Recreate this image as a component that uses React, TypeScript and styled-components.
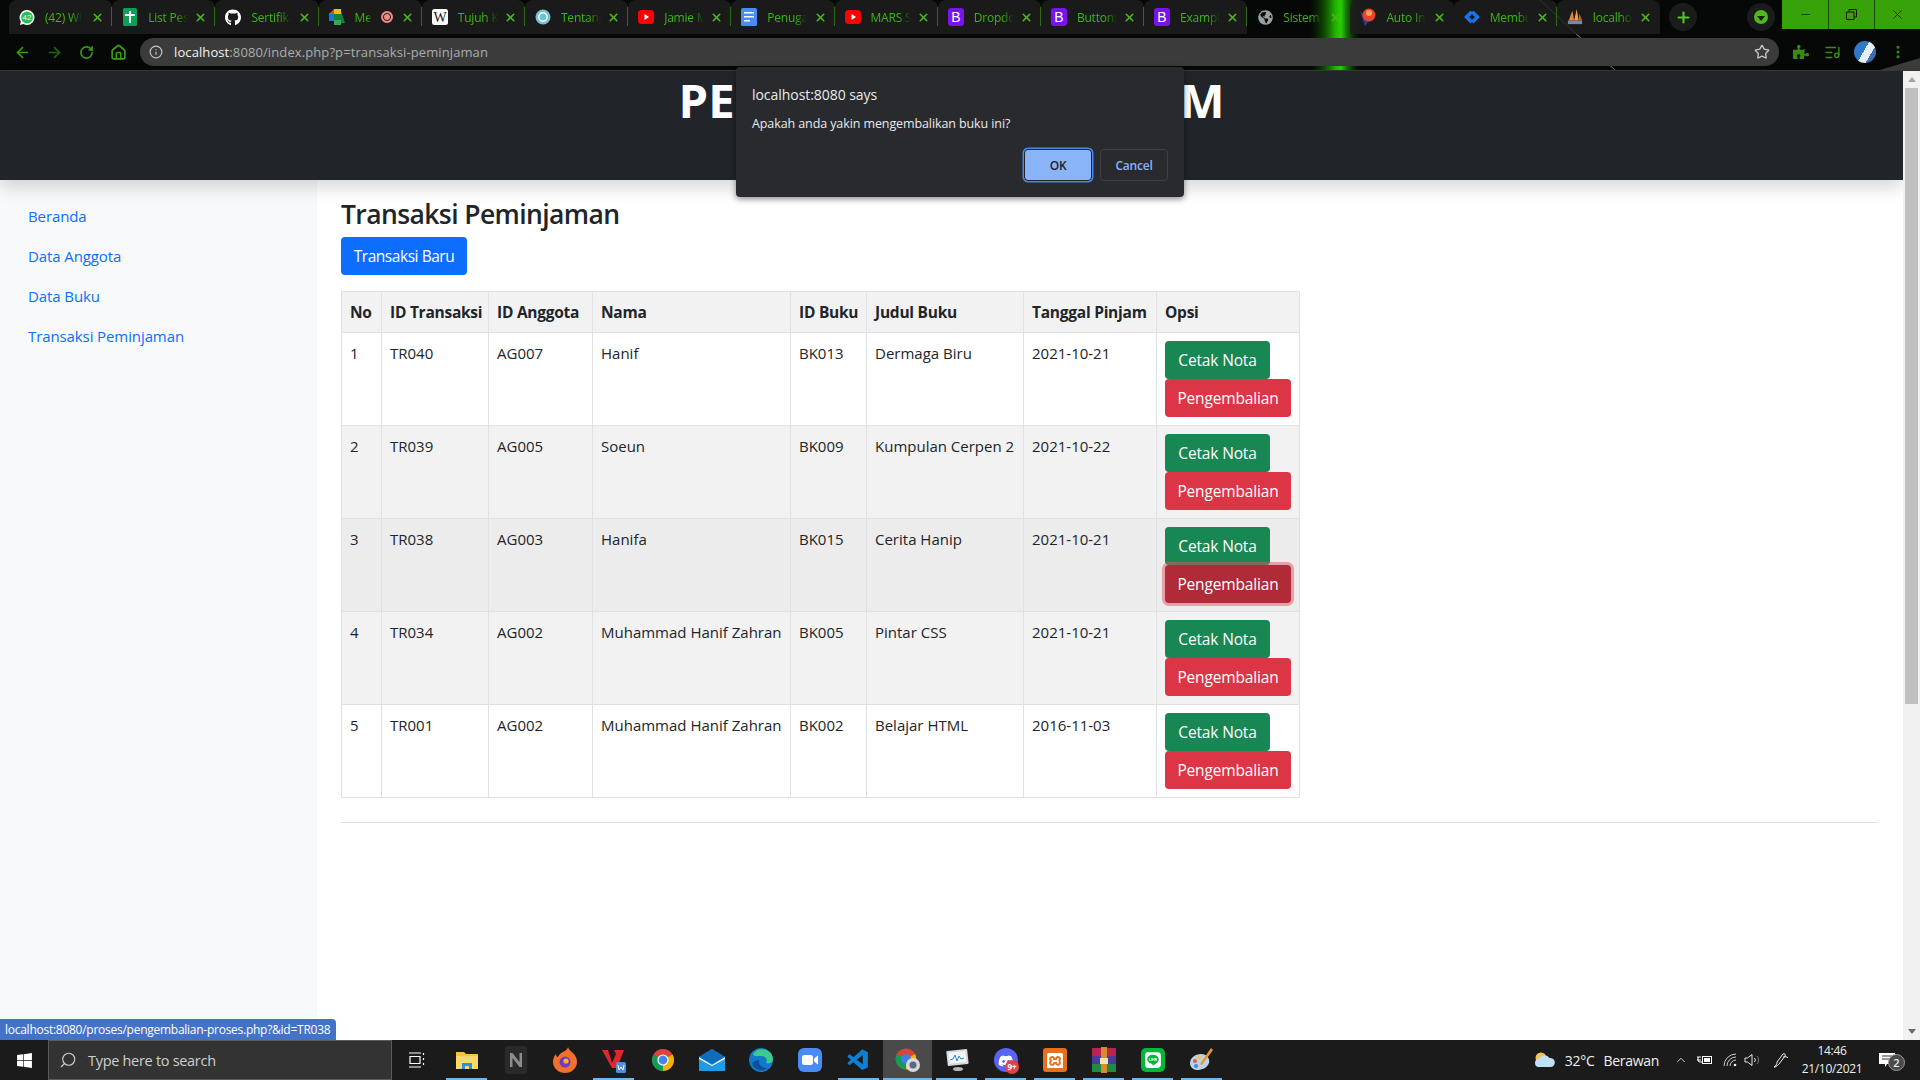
import React from "react";
import styled, { createGlobalStyle } from "styled-components";
import { ArrowLeft, ArrowRight, RotateCw, Home, Info, Star, ListMusic, MoreVertical, X, Plus, Minus, ChevronUp, Search } from "lucide-react";
import { FaGithub, FaWindows, FaGlobeAmericas, FaPuzzlePiece, FaDiscord, FaLine } from "react-icons/fa";
import { SiXampp } from "react-icons/si";
import { VscVscode } from "react-icons/vsc";

const UI = `"Open Sans", "Noto Sans", "Liberation Sans", sans-serif`;

const Global = createGlobalStyle`
  html, body { margin: 0; padding: 0; width: 1920px; height: 1080px; overflow: hidden; background: #fff; }
  * { box-sizing: border-box; }
  #root { width: 1920px; height: 1080px; }
`;

const Screen = styled.div`
  position: relative;
  width: 1920px;
  height: 1080px;
  overflow: hidden;
  display: flex;
  flex-direction: column;
  font-family: ${UI};
  color: #212529;
`;

/* ---------- browser chrome ---------- */
const ChromeFrame = styled.div`
  position: relative;
  height: 71px;
  flex: none;
  background: #060807;
  border-bottom: 1px solid #2c4321;
`;
const Wallpaper = styled.svg`
  position: absolute;
  inset: 0;
`;
const TabStrip = styled.div`
  position: relative;
  height: 34px;
  display: flex;
  align-items: stretch;
  padding-left: 9px;
`;
const Tab = styled.div<{ $plain?: boolean; $noSep?: boolean }>`
  position: relative;
  width: 103.2px;
  flex: none;
  display: flex;
  align-items: center;
  padding-left: 10px;
  background: ${(p) => (p.$plain ? "transparent" : "rgba(30, 31, 31, 0.82)")};
  border-radius: 8px 8px 0 0;
  color: #3db512;
  font-size: 12px;
  &::after {
    content: "";
    display: ${(p) => (p.$noSep ? "none" : "block")};
    position: absolute;
    right: 0;
    top: 7px;
    bottom: 8px;
    width: 1px;
    background: #2e6b14;
  }
`;
const Favicon = styled.span`
  width: 16px;
  height: 16px;
  flex: none;
  display: flex;
  align-items: center;
  justify-content: center;
  color: #fff;
`;
const TabTitle = styled.span<{ $w?: number }>`
  margin-left: 10px;
  width: ${(p) => p.$w ?? 40}px;
  overflow: hidden;
  white-space: nowrap;
  letter-spacing: -0.2px;
  -webkit-mask-image: linear-gradient(90deg, #000 70%, transparent);
  mask-image: linear-gradient(90deg, #000 70%, transparent);
`;
const RecDot = styled.span`
  position: absolute;
  left: 62px;
  top: 11px;
  width: 12px;
  height: 12px;
  border-radius: 50%;
  background: #f28b82;
  border: 2px solid #f28b82;
  box-shadow: inset 0 0 0 1px #1a1b1b;
`;
const TabClose = styled(X)`
  position: absolute;
  right: 8px;
  top: 11px;
  color: #4db51a;
`;
const RoundBtn = styled.div<{ $left: number }>`
  width: 28px;
  height: 28px;
  margin: 3px 0 0 ${(p) => p.$left}px;
  flex: none;
  border-radius: 50%;
  background: #1a1b1b;
  display: flex;
  align-items: center;
  justify-content: center;
  color: #4fc81a;
`;
const StatusDot = styled.span`
  width: 14px;
  height: 14px;
  border-radius: 50%;
  background: #4fb81a;
  display: flex;
  align-items: center;
  justify-content: center;
  &::after {
    content: "";
    border-left: 4px solid transparent;
    border-right: 4px solid transparent;
    border-top: 5px solid #1a1b1b;
    margin-top: 2px;
  }
`;
const WinControls = styled.div`
  position: absolute;
  right: 0;
  top: 0;
  height: 29px;
  display: flex;
  background: #38a20b;
`;
const WinBtn = styled.div`
  width: 46px;
  height: 29px;
  display: flex;
  align-items: center;
  justify-content: center;
  color: #0a1a05;
  & + & { border-left: 1px solid #17470a; }
`;
const Toolbar = styled.div`
  position: relative;
  height: 36px;
  display: flex;
  align-items: center;
  padding-left: 6px;
`;
const NavBtn = styled.span<{ $dim?: boolean }>`
  width: 32px;
  display: flex;
  justify-content: center;
  flex: none;
  color: ${(p) => (p.$dim ? "#255f10" : "#3a9a14")};
`;
const AddressBar = styled.div`
  margin-left: 6px;
  width: 1639px;
  height: 28px;
  flex: none;
  background: #3b3b3b;
  border-radius: 14px;
  display: flex;
  align-items: center;
  padding-left: 9px;
  font-size: 13px;
  color: #a9adb0;
`;
const Url = styled.span`
  margin-left: 11px;
  letter-spacing: 0.1px;
  flex: 1;
  white-space: nowrap;
  b { font-weight: 400; color: #f1f3f4; }
`;
const StarIcon = styled(Star)`
  color: #c7c7c7;
  margin-right: 9px;
`;
const ToolIcons = styled.div`
  display: flex;
  align-items: center;
  margin-left: 9px;
  color: #3a8a16;
`;
const ToolSlot = styled.span<{ $w: number }>`
  width: ${(p) => p.$w}px;
  display: flex;
  justify-content: center;
  align-items: center;
`;
const Avatar = styled.span`
  width: 22px;
  height: 22px;
  border-radius: 50%;
  background: linear-gradient(120deg, #2f79c8 0 45%, #e8eef5 45% 70%, #3d6fb0 70%);
`;

/* ---------- page ---------- */
const Viewport = styled.div`
  flex: 1;
  min-height: 0;
  display: flex;
`;
const Page = styled.div`
  flex: 1;
  min-width: 0;
  display: flex;
  flex-direction: column;
  background: #fff;
`;
const Header = styled.header`
  position: relative;
  height: 109px;
  flex: none;
  background: #212529;
  box-shadow: 0 8px 16px rgba(0, 0, 0, 0.15);
  text-align: center;
`;
const SiteTitle = styled.h1`
  margin: 0;
  font-size: 47.2px;
  line-height: 58px;
  font-weight: 700;
  color: #fff;
`;
const Body = styled.div`
  flex: 1;
  min-height: 0;
  display: flex;
`;
const Sidebar = styled.nav`
  width: 317px;
  flex: none;
  background: #f8f9fa;
  padding-top: 16px;
`;
const SideLink = styled.a`
  display: block;
  height: 40px;
  padding: 8px 28px;
  line-height: 24px;
  font-size: 15px;
  letter-spacing: -0.1px;
  color: #0d6efd;
`;
const Main = styled.main`
  flex: 1;
  min-width: 0;
  padding: 18px 25px 0 24px;
`;
const PageTitle = styled.h2`
  margin: 0 0 6px;
  font-size: 26.5px;
  line-height: 33px;
  font-weight: 600;
  letter-spacing: -0.6px;
`;
const Btn = styled.button<{ $kind: "primary" | "success" | "danger"; $focus?: boolean }>`
  display: block;
  height: 38px;
  padding: 0;
  border: 1px solid transparent;
  border-radius: 4px;
  font-family: ${UI};
  font-size: 15.5px;
  letter-spacing: -0.15px;
  color: #fff;
  white-space: nowrap;
  background: ${(p) =>
    p.$focus ? "#b02a37" : p.$kind === "primary" ? "#0d6efd" : p.$kind === "success" ? "#198754" : "#dc3545"};
  box-shadow: ${(p) => (p.$focus ? "0 0 0 3px rgba(225,83,97,.5)" : "none")};
  position: relative;
`;
const AddBtn = styled(Btn)`
  width: 126px;
  letter-spacing: -0.45px;
`;
const CetakBtn = styled(Btn)`
  width: 105px;
`;
const KembaliBtn = styled(Btn)`
  width: 126px;
`;
const Table = styled.table`
  margin-top: 16px;
  width: 958px;
  table-layout: fixed;
  border-collapse: collapse;
  font-size: 15px;
  line-height: 24px;
`;
const Row = styled.tr<{ $bg: string }>`
  background: ${(p) => p.$bg};
`;
const Th = styled.th`
  border: 1px solid #dee2e6;
  padding: 8px;
  text-align: left;
  font-weight: 700;
  font-size: 15.5px;
  white-space: nowrap;
  letter-spacing: -0.25px;
`;
const Td = styled.td`
  border: 1px solid #dee2e6;
  padding: 8px;
  vertical-align: top;
  white-space: nowrap;
  color: #212529;
`;
const Rule = styled.hr`
  margin: 24px 0 0;
  border: 0;
  border-top: 1px solid #dfe2e5;
`;
const Scrollbar = styled.div`
  width: 17px;
  flex: none;
  position: relative;
  background: #f1f1f1;
  display: flex;
  flex-direction: column;
  align-items: center;
`;
const ArrowUp = styled.span`
  margin-top: 6px;
  border-left: 4px solid transparent;
  border-right: 4px solid transparent;
  border-bottom: 5px solid #a3a3a3;
`;
const Thumb = styled.div`
  margin-top: 6px;
  width: 13px;
  height: 616px;
  background: #c0c0c0;
`;
const ArrowDown = styled.span`
  margin-top: auto;
  margin-bottom: 6px;
  border-left: 4px solid transparent;
  border-right: 4px solid transparent;
  border-top: 5px solid #6a6a6a;
`;

/* ---------- overlays ---------- */
const Dialog = styled.div`
  position: absolute;
  left: 736px;
  top: 67px;
  width: 448px;
  height: 130px;
  background: #292a2d;
  border-radius: 4px;
  box-shadow: 0 2px 6px rgba(0, 0, 0, 0.45);
  padding: 16px;
  color: #e8eaed;
`;
const DialogTitle = styled.div`
  font-size: 14px;
  line-height: 24px;
  letter-spacing: -0.05px;
`;
const DialogText = styled.div`
  margin-top: 8px;
  font-size: 12.5px;
  line-height: 18px;
  letter-spacing: -0.1px;
`;
const DialogActions = styled.div`
  position: absolute;
  right: 16px;
  bottom: 16px;
  display: flex;
  gap: 8px;
`;
const DialogBtn = styled.div<{ $ok?: boolean }>`
  width: 68px;
  height: 32px;
  display: flex;
  align-items: center;
  justify-content: center;
  border-radius: 4px;
  font-size: 12px;
  font-weight: 600;
  letter-spacing: -0.2px;
  background: ${(p) => (p.$ok ? "#8ab4f8" : "transparent")};
  color: ${(p) => (p.$ok ? "#202124" : "#8ab4f8")};
  border: ${(p) => (p.$ok ? "1px solid #202124" : "1px solid #3c4043")};
  box-shadow: ${(p) => (p.$ok ? "0 0 0 1.5px #4a86e8" : "none")};
`;
const StatusBubble = styled.div`
  position: absolute;
  left: 0;
  bottom: 40px;
  height: 21px;
  width: 336px;
  background: #4373c9;
  color: #fff;
  border-radius: 0 4px 0 0;
  padding-left: 5px;
  font-size: 12px;
  line-height: 21px;
  letter-spacing: -0.26px;
  white-space: nowrap;
`;

/* ---------- taskbar ---------- */
const Taskbar = styled.footer`
  height: 40px;
  flex: none;
  background: #1b1b1b;
  display: flex;
  align-items: stretch;
  color: #fff;
`;
const StartBtn = styled.div`
  width: 48px;
  display: flex;
  align-items: center;
  justify-content: center;
`;
const SearchBox = styled.div`
  width: 344px;
  background: #333;
  border: 1px solid #5c5c5c;
  display: flex;
  align-items: center;
  padding-left: 10px;
  color: #cfcfcf;
  font-size: 14.5px;
  letter-spacing: -0.3px;
`;
const SearchLabel = styled.span`
  margin-left: 11px;
`;
const MirrorSearch = styled(Search)`
  transform: scaleX(-1);
`;
const TaskViewSlot = styled.div`
  width: 50px;
  display: flex;
  align-items: center;
  justify-content: center;
`;
const AppSlot = styled.div<{ $open?: boolean; $active?: boolean }>`
  position: relative;
  width: 49px;
  flex: none;
  display: flex;
  align-items: center;
  justify-content: center;
  background: ${(p) => (p.$active ? "#4a4a4a" : "transparent")};
  &::after {
    content: "";
    display: ${(p) => (p.$open ? "block" : "none")};
    position: absolute;
    bottom: 0;
    left: ${(p) => (p.$active ? 0 : "4px")};
    right: ${(p) => (p.$active ? 0 : "4px")};
    height: 2px;
    background: #6db6ee;
  }
`;
const Tray = styled.div`
  margin-left: auto;
  display: flex;
  align-items: center;
  font-size: 14px;
  color: #f0f0f0;
`;
const TrayText = styled.span<{ $left: number }>`
  margin-left: ${(p) => p.$left}px;
  letter-spacing: -0.3px;
  white-space: nowrap;
`;
const TraySlot = styled.span<{ $w: number; $left?: number }>`
  width: ${(p) => p.$w}px;
  margin-left: ${(p) => p.$left ?? 0}px;
  display: flex;
  justify-content: center;
  align-items: center;
`;
const Clock = styled.div`
  width: 72px;
  text-align: center;
  font-size: 12px;
  line-height: 18px;
  letter-spacing: -0.3px;
`;
const Notify = styled.div`
  position: relative;
  width: 38px;
  height: 40px;
  margin-right: 14px;
  display: flex;
  align-items: center;
  justify-content: center;
`;
const NotifyBadge = styled.span`
  position: absolute;
  left: 20px;
  top: 14px;
  width: 17px;
  height: 17px;
  border-radius: 50%;
  background: #4a4a4a;
  border: 1px solid #999;
  font-size: 11px;
  line-height: 15px;
  text-align: center;
  font-weight: 600;
`;
const DiscordBadge = styled.span`
  position: absolute;
  left: 24px;
  top: 20px;
  width: 14px;
  height: 14px;
  border-radius: 50%;
  background: #e5404a;
  font-size: 8px;
  line-height: 14px;
  text-align: center;
  color: #fff;
  font-weight: 700;
`;

/* ---------- small drawings ---------- */
const ChromeLogo = ({ size = 24 }: { size?: number }) => (
  <svg width={size} height={size} viewBox="0 0 24 24">
    <circle cx="12" cy="12" r="11" fill="#db4437" />
    <path d="M12 12 L21.5 6.5 A11 11 0 0 1 12 23 Z" fill="#f4b400" />
    <path d="M12 12 L12 23 A11 11 0 0 1 2.5 6.5 Z" fill="#0f9d58" />
    <circle cx="12" cy="12" r="5.6" fill="#fff" />
    <circle cx="12" cy="12" r="4.4" fill="#4285f4" />
  </svg>
);
const Bootstrap = () => (
  <svg width="16" height="18" viewBox="0 0 16 18">
    <rect y="0" width="16" height="18" rx="3" fill="#7a12f0" />
    <text x="8" y="14" textAnchor="middle" fontFamily="Liberation Sans" fontSize="14" fill="#fff">B</text>
  </svg>
);
const YouTube = () => (
  <svg width="16" height="14" viewBox="0 0 16 14">
    <rect width="16" height="14" rx="3.5" fill="#f00" />
    <path d="M6.5 4 L11 7 L6.5 10 Z" fill="#fff" />
  </svg>
);
const favicons: React.ReactNode[] = [
  <svg width="17" height="17" viewBox="0 0 17 17">
    <path d="M8.5 0.5a8 8 0 0 1 0 16 8 8 0 0 1-3.8-1L1 16.5l1-3.6a8 8 0 0 1 6.5-12.4z" fill="#fff" />
    <circle cx="8.5" cy="8.5" r="6.3" fill="#25c05a" />
    <text x="8.5" y="11.5" textAnchor="middle" fontFamily="Liberation Sans" fontSize="8.5" fill="#fff">42</text>
  </svg>,
  <svg width="14" height="18" viewBox="0 0 14 18">
    <rect width="14" height="18" rx="1.5" fill="#0f9d58" />
    <path d="M6 3h2v3h4v2H8v7H6V8H2V6h4z" fill="#fff" />
  </svg>,
  <FaGithub size={17} />,
  <svg width="16" height="16" viewBox="0 0 16 16">
    <rect x="0" y="4" width="5" height="8" fill="#1a73e8" />
    <path d="M5 0h7v5H5z" fill="#fbbc04" />
    <path d="M5 0v5H0z" fill="#ea4335" />
    <path d="M5 11h7v5H5z" fill="#34a853" />
    <path d="M12 2v12h4z M5 5h7v6H5z" fill="#188038" />
  </svg>,
  <svg width="16" height="16" viewBox="0 0 16 16">
    <rect width="16" height="16" rx="2.5" fill="#fff" />
    <text x="8" y="13" textAnchor="middle" fontFamily="Liberation Serif" fontSize="14" fill="#111">W</text>
  </svg>,
  <svg width="16" height="16" viewBox="0 0 16 16">
    <circle cx="8" cy="8" r="7.5" fill="#6fc3d4" />
    <circle cx="8" cy="8" r="4.2" fill="none" stroke="#fff" strokeWidth="1.4" />
  </svg>,
  <YouTube />,
  <svg width="16" height="18" viewBox="0 0 16 18">
    <rect width="16" height="18" rx="1.5" fill="#4a8cf7" />
    <path d="M3 4h10v1.6H3zM3 8h10v1.6H3zM3 12h6v1.6H3z" fill="#fff" />
  </svg>,
  <YouTube />,
  <Bootstrap />,
  <Bootstrap />,
  <Bootstrap />,
  <FaGlobeAmericas size={15} color="#9aa0a6" />,
  <svg width="16" height="18" viewBox="0 0 16 18">
    <path d="M0 3l5 15 4-5z" fill="#2e3f9e" />
    <circle cx="9" cy="7" r="6.5" fill="#e8452c" />
    <circle cx="9" cy="5" r="3" fill="#f5a25d" />
  </svg>,
  <svg width="17" height="14" viewBox="0 0 17 14">
    <path d="M7 0 L0 7 L7 14 L9.5 11 L5.5 7 L9.5 3 Z" fill="#1a73e8" />
    <path d="M10 0 L17 7 L10 14 L7.5 11 L11.5 7 L7.5 3 Z" fill="#1a73e8" />
  </svg>,
  <svg width="18" height="18" viewBox="0 0 18 18">
    <path d="M2 13 L6 2 L8 13Z" fill="#e88a2a" />
    <path d="M8 13 L11 0 L13 13Z" fill="#f2a13a" />
    <path d="M13 13 L14 5 L17 13Z" fill="#c96a14" />
    <rect x="1" y="13" width="16" height="4" fill="#7c86a8" />
  </svg>,
];
const tabs = [
  { t: "(42) WhatsApp", w: 37 },
  { t: "List Peserta", w: 40 },
  { t: "Sertifikat", w: 40 },
  { t: "Meet", w: 17, rec: true },
  { t: "Tujuh Keajaiban", w: 40 },
  { t: "Tentang Kami", w: 40 },
  { t: "Jamie Miller", w: 40 },
  { t: "Penugasan", w: 40 },
  { t: "MARS Song", w: 40 },
  { t: "Dropdowns", w: 40 },
  { t: "Buttons", w: 40 },
  { t: "Examples", w: 40 },
  { t: "Sistem Informasi", w: 40, plain: true },
  { t: "Auto Install", w: 40, noSep: true },
  { t: "Membuat", w: 40 },
  { t: "localhost", w: 40, noSep: true },
];
const colWidths = [40, 107, 104, 198, 76, 157, 133, 143];
const heads = ["No", "ID Transaksi", "ID Anggota", "Nama", "ID Buku", "Judul Buku", "Tanggal Pinjam", "Opsi"];
const rows = [
  ["1", "TR040", "AG007", "Hanif", "BK013", "Dermaga Biru", "2021-10-21"],
  ["2", "TR039", "AG005", "Soeun", "BK009", "Kumpulan Cerpen 2", "2021-10-22"],
  ["3", "TR038", "AG003", "Hanifa", "BK015", "Cerita Hanip", "2021-10-21"],
  ["4", "TR034", "AG002", "Muhammad Hanif Zahran", "BK005", "Pintar CSS", "2021-10-21"],
  ["5", "TR001", "AG002", "Muhammad Hanif Zahran", "BK002", "Belajar HTML", "2016-11-03"],
];
const rowBg = ["#fff", "#f2f2f2", "#ececec", "#f2f2f2", "#fff"];

const apps: { icon: React.ReactNode; open?: boolean; active?: boolean; badge?: boolean }[] = [
  {
    open: true,
    icon: (
      <svg width="24" height="24" viewBox="0 0 24 24">
        <path d="M1 4h8l2 2h12v15H1z" fill="#f4c542" />
        <rect x="1" y="8" width="22" height="13" fill="#fbd96b" />
        <path d="M7 21v-6h10v6h-3v-3h-4v3z" fill="#2f8fdb" />
      </svg>
    ),
  },
  {
    icon: (
      <svg width="24" height="30" viewBox="0 0 24 30">
        <rect x="1" y="1" width="22" height="28" rx="3" fill="#2a2a2a" />
        <path d="M6 22V8h2.5l7 9V8H18v14h-2.5l-7-9v9z" fill="#8d8d8d" />
      </svg>
    ),
  },
  {
    icon: (
      <svg width="24" height="26" viewBox="0 0 24 26">
        <path d="M12 4c2-2 3-3 3-4 1 3 3 4 5 6 3 3 4 6 4 9a12 11 0 0 1-24 0c0-3 1-6 3-8 0 2 1 3 2 3 1-3 4-5 7-6z" fill="#f2702c" />
        <path d="M2 14a10 10 0 0 0 20 2 10 10 0 0 1-20-2z" fill="#e0304e" />
        <circle cx="12" cy="15" r="5.5" fill="#6d3bc4" />
        <circle cx="13" cy="14" r="2.6" fill="#f7b12f" />
      </svg>
    ),
  },
  {
    open: true,
    icon: (
      <svg width="26" height="26" viewBox="0 0 26 26">
        <path d="M1 3h6l4 13 4-9-2-4h10l-7 18h-5z" fill="#e3262e" />
        <rect x="15" y="15" width="10" height="11" rx="1.5" fill="#4b8fe0" />
        <path d="M17 18l1 5 2-3 2 3 1-5" stroke="#fff" fill="none" strokeWidth="1" />
      </svg>
    ),
  },
  { icon: <ChromeLogo /> },
  {
    icon: (
      <svg width="26" height="22" viewBox="0 0 26 22">
        <path d="M0 8L13 0l13 8v14H0z" fill="#1c9be6" />
        <path d="M0 8l13 8 13-8v2L13 17 0 10z" fill="#fff" />
        <path d="M0 8L13 0l13 8-13 7z" fill="#0f6cbd" />
      </svg>
    ),
  },
  {
    icon: (
      <svg width="24" height="26" viewBox="0 0 24 26">
        <circle cx="12" cy="13" r="12" fill="#1179c9" />
        <path d="M4 7a11 11 0 0 1 20 5c0 4-4 5-7 4 2-3 0-7-5-7-4 0-7 1-8-2z" fill="#3ccb8e" />
        <path d="M10 13c-1 5 3 8 8 8-3 4-13 3-15-5 2-2 5-3 7-3z" fill="#0b4f96" />
      </svg>
    ),
  },
  {
    icon: (
      <svg width="24" height="26" viewBox="0 0 24 26">
        <rect y="1" width="24" height="24" rx="6" fill="#4a8cf7" />
        <rect x="4" y="8" width="11" height="10" rx="2.5" fill="#fff" />
        <path d="M16 11.5l4-3v9l-4-3z" fill="#fff" />
      </svg>
    ),
  },
  { open: true, icon: <VscVscode size={25} color="#0f7fd3" /> },
  {
    open: true,
    active: true,
    icon: (
      <svg width="26" height="26" viewBox="0 0 26 26">
        <circle cx="11" cy="12" r="10.5" fill="#db4437" />
        <path d="M11 12 L20 7 A10.5 10.5 0 0 1 11 22.5 Z" fill="#f4b400" />
        <path d="M11 12 L11 22.5 A10.5 10.5 0 0 1 2 7 Z" fill="#0f9d58" />
        <circle cx="11" cy="12" r="5" fill="#3f7fe0" />
        <circle cx="18" cy="18" r="7" fill="#d8d8d8" />
        <circle cx="18" cy="18" r="3.5" fill="#586a85" />
      </svg>
    ),
  },
  {
    open: true,
    icon: (
      <svg width="24" height="24" viewBox="0 0 24 24">
        <rect x="2" y="2" width="21" height="15" rx="1" fill="#d8d8d8" transform="rotate(-6 12 10)" />
        <rect x="4" y="4" width="17" height="11" fill="#f2f7fb" transform="rotate(-6 12 10)" />
        <path d="M5 12l3-1 2-4 2 6 2-5 2 3 3-1" stroke="#3c84c6" strokeWidth="1" fill="none" />
        <ellipse cx="13" cy="21" rx="5" ry="2" fill="#b5b5b5" />
      </svg>
    ),
  },
  {
    open: true,
    badge: true,
    icon: (
      <svg width="24" height="26" viewBox="0 0 24 26">
        <circle cx="12" cy="13" r="12" fill="#5865f2" />
        <foreignObject x="4" y="5" width="16" height="16">
          <FaDiscord size={16} color="#fff" />
        </foreignObject>
      </svg>
    ),
  },
  {
    open: true,
    icon: (
      <svg width="24" height="26" viewBox="0 0 24 26">
        <rect y="1" width="24" height="24" rx="3" fill="#e86f1c" />
        <foreignObject x="4" y="5" width="16" height="16">
          <SiXampp size={16} color="#fff" />
        </foreignObject>
      </svg>
    ),
  },
  {
    open: true,
    icon: (
      <svg width="24" height="26" viewBox="0 0 24 26">
        <rect width="24" height="8" y="1" fill="#b92350" />
        <rect width="24" height="8" y="9" fill="#4a3a9c" />
        <rect width="24" height="8" y="17" fill="#228a47" />
        <rect x="9" y="0" width="6" height="26" fill="#d98a2c" />
        <rect x="8" y="11" width="8" height="6" fill="#f2e2b8" />
      </svg>
    ),
  },
  {
    open: true,
    icon: (
      <svg width="24" height="26" viewBox="0 0 24 26">
        <rect y="1" width="24" height="24" rx="5" fill="#07b53b" />
        <foreignObject x="3" y="4" width="18" height="18">
          <FaLine size={18} color="#fff" />
        </foreignObject>
      </svg>
    ),
  },
  {
    open: true,
    icon: (
      <svg width="24" height="26" viewBox="0 0 24 26">
        <path d="M11 7C5 7 0 11 0 16c0 4 3 7 7 7 5 0 10-2 12-7 1-3-1-9-8-9z" fill="#bcd3e6" />
        <circle cx="5" cy="14" r="2" fill="#e2584a" />
        <circle cx="9" cy="10.5" r="1.8" fill="#f2c53d" />
        <circle cx="6" cy="19" r="2" fill="#3f8fd8" />
        <path d="M21 1 L23 3 L12 18 L10 17 Z" fill="#e8962e" />
      </svg>
    ),
  },
];

export default function App() {
  return (
    <Screen>
      <Global />
      <ChromeFrame>
        <Wallpaper width="1920" height="70" viewBox="0 0 1920 70">
          <defs>
            <linearGradient id="streak" x1="0" x2="1" y1="0" y2="0">
              <stop offset="0" stopColor="#0a3a00" stopOpacity="0" />
              <stop offset="0.5" stopColor="#1fb000" />
              <stop offset="0.62" stopColor="#28d000" />
              <stop offset="1" stopColor="#0a3a00" stopOpacity="0" />
            </linearGradient>
          </defs>
          <rect x="1310" y="0" width="50" height="70" fill="url(#streak)" />
          <path d="M1540 0 L1615 70" stroke="#8a8a8a" strokeWidth="1" />
          <path d="M1880 70 L1920 58 L1920 70 Z" fill="#3b3b3b" />
        </Wallpaper>
        <TabStrip>
          {tabs.map((tab, i) => (
            <Tab key={i} $plain={tab.plain} $noSep={tab.noSep || tab.plain}>
              <Favicon>{favicons[i]}</Favicon>
              <TabTitle $w={tab.w}>{tab.t}</TabTitle>
              {tab.rec && <RecDot />}
              <TabClose size={13} strokeWidth={3} />
            </Tab>
          ))}
          <RoundBtn $left={9}>
            <Plus size={17} strokeWidth={3} />
          </RoundBtn>
          <RoundBtn $left={50}>
            <StatusDot />
          </RoundBtn>
        </TabStrip>
        <WinControls>
          <WinBtn><Minus size={13} strokeWidth={1.5} /></WinBtn>
          <WinBtn>
            <svg width="11" height="11" viewBox="0 0 11 11" fill="none" stroke="currentColor">
              <path d="M.5 3h7.5v7.5H.5zM3 3V.5h7.5V8H8" />
            </svg>
          </WinBtn>
          <WinBtn><X size={15} strokeWidth={1.2} /></WinBtn>
        </WinControls>
        <Toolbar>
          <NavBtn><ArrowLeft size={17} strokeWidth={2.4} /></NavBtn>
          <NavBtn $dim><ArrowRight size={17} strokeWidth={2.4} /></NavBtn>
          <NavBtn><RotateCw size={15} strokeWidth={2.6} /></NavBtn>
          <NavBtn><Home size={17} strokeWidth={2.4} /></NavBtn>
          <AddressBar>
            <Info size={14} color="#c4c7c5" />
            <Url><b>localhost</b>:8080/index.php?p=transaksi-peminjaman</Url>
            <StarIcon size={16} strokeWidth={2} />
          </AddressBar>
          <ToolIcons>
            <ToolSlot $w={26}><FaPuzzlePiece size={16} /></ToolSlot>
            <ToolSlot $w={37}><ListMusic size={17} strokeWidth={2} /></ToolSlot>
            <ToolSlot $w={28}><Avatar /></ToolSlot>
            <ToolSlot $w={38}><MoreVertical size={16} strokeWidth={2.6} /></ToolSlot>
          </ToolIcons>
        </Toolbar>
      </ChromeFrame>

      <Viewport>
        <Page>
          <Header>
            <SiteTitle>PERPUSTAKAAN UMUM</SiteTitle>
          </Header>
          <Body>
            <Sidebar>
              <SideLink>Beranda</SideLink>
              <SideLink>Data Anggota</SideLink>
              <SideLink>Data Buku</SideLink>
              <SideLink>Transaksi Peminjaman</SideLink>
            </Sidebar>
            <Main>
              <PageTitle>Transaksi Peminjaman</PageTitle>
              <AddBtn $kind="primary">Transaksi Baru</AddBtn>
              <Table>
                <colgroup>
                  {colWidths.map((w, i) => (
                    <col key={i} width={w} />
                  ))}
                </colgroup>
                <thead>
                  <Row $bg="#f2f2f2">
                    {heads.map((h) => (
                      <Th key={h}>{h}</Th>
                    ))}
                  </Row>
                </thead>
                <tbody>
                  {rows.map((r, i) => (
                    <Row key={r[1]} $bg={rowBg[i]}>
                      {r.map((c, j) => (
                        <Td key={j}>{c}</Td>
                      ))}
                      <Td>
                        <CetakBtn $kind="success">Cetak Nota</CetakBtn>
                        <KembaliBtn $kind="danger" $focus={i === 2}>Pengembalian</KembaliBtn>
                      </Td>
                    </Row>
                  ))}
                </tbody>
              </Table>
              <Rule />
            </Main>
          </Body>
        </Page>
        <Scrollbar>
          <ArrowUp />
          <Thumb />
          <ArrowDown />
        </Scrollbar>
      </Viewport>

      <Taskbar>
        <StartBtn><FaWindows size={17} /></StartBtn>
        <SearchBox>
          <MirrorSearch size={18} strokeWidth={1.5} />
          <SearchLabel>Type here to search</SearchLabel>
        </SearchBox>
        <TaskViewSlot>
          <svg width="16" height="16" viewBox="0 0 16 16" fill="none" stroke="#fff" strokeWidth="1.2">
            <path d="M0 1h12M0 15h12M1 4.5h10v7H1zM14.5 1v2M14.5 6v2M14.5 11v2" />
          </svg>
        </TaskViewSlot>
        {apps.map((a, i) => (
          <AppSlot key={i} $open={a.open} $active={a.active}>
            {a.icon}
            {a.badge && <DiscordBadge>9+</DiscordBadge>}
          </AppSlot>
        ))}
        <Tray>
          <svg width="22" height="16" viewBox="0 0 22 16">
            <circle cx="7" cy="6" r="5.5" fill="#f6c453" />
            <path d="M5 15a4 4 0 0 1 0-8 6 5.5 0 0 1 10.5-1A4.5 4.5 0 0 1 17 15z" fill="#bfe0f5" />
          </svg>
          <TrayText $left={9}>32°C</TrayText>
          <TrayText $left={9}>Berawan</TrayText>
          <TraySlot $w={14} $left={15}><ChevronUp size={18} strokeWidth={1.4} /></TraySlot>
          <TraySlot $w={34}>
            <svg width="16" height="11" viewBox="0 0 16 11" fill="none" stroke="#fff">
              <path d="M0 2h4M0 5h4M1 2v3q0 2 2 2h2" />
              <rect x="5.5" y="1.5" width="9" height="7" />
              <rect x="7" y="3" width="6" height="4" fill="#fff" stroke="none" />
            </svg>
          </TraySlot>
          <TraySlot $w={16}>
            <svg width="15" height="14" viewBox="0 0 15 14" fill="none" stroke="#cfcfcf" strokeWidth="1">
              <path d="M1 13A12 12 0 0 1 13 1M4 13A9 9 0 0 1 13 4M7 13A6 6 0 0 1 13 7" />
              <circle cx="12" cy="12" r="1.3" fill="#fff" stroke="none" />
            </svg>
          </TraySlot>
          <TraySlot $w={28}>
            <svg width="17" height="14" viewBox="0 0 17 14" fill="none" stroke="#e8e8e8" strokeWidth="1">
              <path d="M1 5h2.5L8 1.5v11L3.5 9H1z" />
              <path d="M10.5 5a3 3 0 0 1 0 4" />
              <path d="M13 3a6 6 0 0 1 0 8" stroke="#777" />
            </svg>
          </TraySlot>
          <TraySlot $w={30}>
            <svg width="16" height="16" viewBox="0 0 16 16" fill="none" stroke="#f0f0f0" strokeWidth="1">
              <path d="M1 15c2-1 3-3 3-5l6-8c1-1 3 0 2 2l-6 8c-1 1-2 2-4 3z" />
              <path d="M10 5c2 0 4-1 5 1" />
            </svg>
          </TraySlot>
          <Clock>14:46<br />21/10/2021</Clock>
          <Notify>
            <svg width="16" height="14" viewBox="0 0 16 14">
              <path d="M0 0h16v11H8l-2 3v-3H0z" fill="#fff" />
              <path d="M3 3h10M3 6h10" stroke="#333" />
            </svg>
            <NotifyBadge>2</NotifyBadge>
          </Notify>
        </Tray>
      </Taskbar>

      <Dialog>
        <DialogTitle>localhost:8080 says</DialogTitle>
        <DialogText>Apakah anda yakin mengembalikan buku ini?</DialogText>
        <DialogActions>
          <DialogBtn $ok>OK</DialogBtn>
          <DialogBtn>Cancel</DialogBtn>
        </DialogActions>
      </Dialog>
      <StatusBubble>localhost:8080/proses/pengembalian-proses.php?&amp;id=TR038</StatusBubble>
    </Screen>
  );
}
